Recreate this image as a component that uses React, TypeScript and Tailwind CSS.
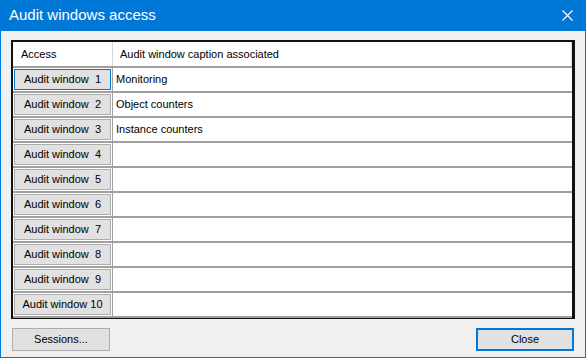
import React from "react";

const captions = ["Monitoring", "Object counters", "Instance counters", "", "", "", "", "", "", ""];

function Row({ n, caption }: { n: number; caption: string }) {
  const focused = n === 1;
  return (
    <div className="flex h-[25px] border-b-2 border-[#a0a0a0]">
      <div className="w-[100px] p-px border-r border-[#a0a0a0] flex">
        <div
          className={`flex-1 flex items-center justify-center bg-[#e1e1e1] border ${
            focused ? "border-[#0078d7]" : "border-[#adadad]"
          } text-[11px] text-black whitespace-pre`}
        >
          {`Audit window ${n < 10 ? " " : ""}${n}`}
        </div>
      </div>
      <div className="flex-1 bg-white flex items-center pl-[3px] text-[11px] text-black">{caption}</div>
    </div>
  );
}

export default function App() {
  return (
    <div
      className="w-[586px] h-[358px] flex flex-col bg-[#f0f0f0] border border-t-0 border-[#0078d7] overflow-hidden"
      style={{ fontFamily: '"Liberation Sans", Arial, sans-serif' }}
    >
      <div className="h-[31px] bg-[#0078d7] flex items-center justify-between pl-[8px] pr-[10px] shrink-0">
        <span className="text-white text-[15px]">Audit windows access</span>
        <svg width="11" height="11" viewBox="0 0 11 11" className="mr-[2px]">
          <path d="M0.5 0.5L10.5 10.5M10.5 0.5L0.5 10.5" stroke="white" strokeWidth="1.1" />
        </svg>
      </div>

      <div className="flex-1 flex flex-col px-[10px] pt-[9px]">
        <div className="border-2 border-[#111] border-r-[3px] border-b-[1px] bg-white flex flex-col">
          <div className="flex h-[26px] border-b-2 border-[#a0a0a0]">
            <div className="w-[100px] border-r border-[#d8d8d8] flex items-center pl-[8px] text-[11px] text-black">
              Access
            </div>
            <div className="flex-1 flex items-center pl-[7px] text-[11px] text-black border-r border-[#d8d8d8]">
              Audit window caption associated
            </div>
          </div>
          {captions.map((c, i) => (
            <Row key={i} n={i + 1} caption={c} />
          ))}
        </div>

        <div className="flex justify-between mt-[9px] mb-[6px] pr-[1px]">
          <button className="w-[98px] h-[23px] bg-[#e1e1e1] border border-[#adadad] text-[11px] text-black ml-[1px]">
            Sessions...
          </button>
          <button className="w-[98px] h-[23px] bg-[#e1e1e1] border-2 border-[#0078d7] text-[11px] text-black">
            Close
          </button>
        </div>
      </div>
    </div>
  );
}
